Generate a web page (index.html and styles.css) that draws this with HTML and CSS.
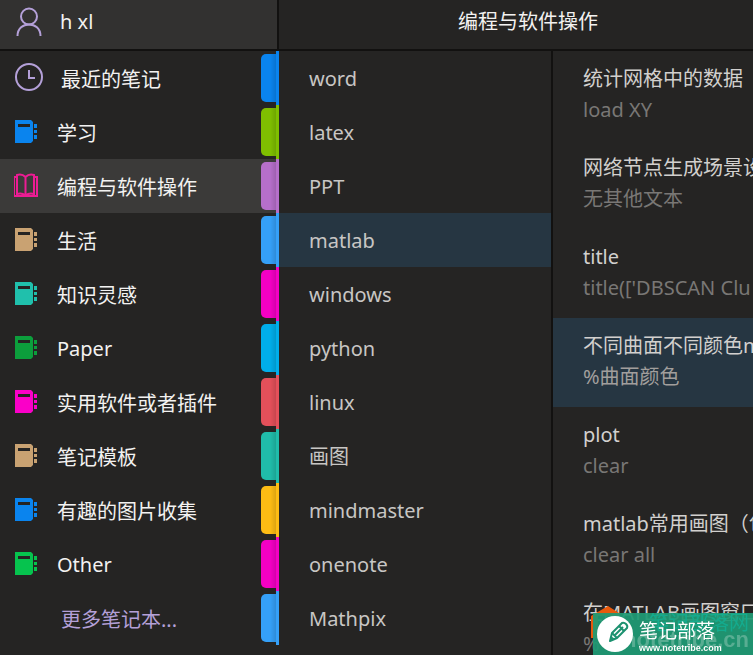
FILE: index.html
```html
<!DOCTYPE html>
<html lang="zh-CN">
<head>
    <meta charset="UTF-8">
    <meta name="viewport" content="width=device-width, initial-scale=1.0">
    <title>编程与软件操作</title>
    <link rel="stylesheet" href="styles.css">
</head>
<body>
    <!-- Shared icons -->
    <svg class="icon-defs" aria-hidden="true">
        <symbol id="notebook" viewBox="0 0 24 26">
            <path fill="currentColor" d="M1 1h16l2 2v19l-2 2H1z"/>
            <path fill="#252423" d="M4 5h12v3H4z"/>
            <path fill="currentColor" d="M20 5h3v4h-3zM20 11h3v3h-3zM20 16h3v4h-3z"/>
        </symbol>
    </svg>

    <div class="app">
        <header>
            <button class="account">
                <svg class="round-icon" viewBox="0 0 30 30" fill="none" stroke="currentColor" stroke-width="2">
                    <circle cx="15" cy="9.500" r="8"/>
                    <path d="M3.500 29c0-15.500 23-15.500 23 0"/>
                </svg>
                <span>h xl</span>
            </button>
            <h1>编程与软件操作</h1>
        </header>

        <main>
            <nav class="notebooks">
                <a href="#" class="recent">
                    <svg class="round-icon" viewBox="0 0 30 30" fill="none" stroke="currentColor" stroke-width="2">
                        <circle cx="15" cy="14" r="13"/>
                        <path d="M15 7v8h6"/>
                    </svg>
                    <span>最近的笔记</span>
                </a>
                <a href="#"><svg class="book blue"><use href="#notebook"/></svg><span>学习</span></a>
                <a href="#" class="selected">
                    <svg class="book pink" viewBox="0 0 24 26" fill="none" stroke="currentColor" stroke-width="2">
                        <path d="M11.500 4C9 1.500 6 1 3 2v19c3-1 6-.5 8.500 1.500C14 20.500 17 20 20 21V2c-3-1-6-.5-8.500 2v18"/>
                        <path d="M3 4H0v19h23V4h-3"/>
                    </svg>
                    <span>编程与软件操作</span>
                </a>
                <a href="#"><svg class="book tan"><use href="#notebook"/></svg><span>生活</span></a>
                <a href="#"><svg class="book teal"><use href="#notebook"/></svg><span>知识灵感</span></a>
                <a href="#"><svg class="book green"><use href="#notebook"/></svg><span>Paper</span></a>
                <a href="#"><svg class="book magenta"><use href="#notebook"/></svg><span>实用软件或者插件</span></a>
                <a href="#"><svg class="book tan"><use href="#notebook"/></svg><span>笔记模板</span></a>
                <a href="#"><svg class="book blue"><use href="#notebook"/></svg><span>有趣的图片收集</span></a>
                <a href="#"><svg class="book emerald"><use href="#notebook"/></svg><span>Other</span></a>
                <a href="#" class="more">更多笔记本...</a>
            </nav>

            <nav class="sections">
                <a href="#" class="blue">word</a>
                <a href="#" class="lime">latex</a>
                <a href="#" class="purple">PPT</a>
                <a href="#" class="sky selected">matlab</a>
                <a href="#" class="magenta">windows</a>
                <a href="#" class="cyan">python</a>
                <a href="#" class="red">linux</a>
                <a href="#" class="teal">画图</a>
                <a href="#" class="yellow">mindmaster</a>
                <a href="#" class="magenta">onenote</a>
                <a href="#" class="sky">Mathpix</a>
            </nav>

            <nav class="pages">
                <a href="#"><span>统计网格中的数据</span><small>load XY</small></a>
                <a href="#"><span>网络节点生成场景设</span><small>无其他文本</small></a>
                <a href="#"><span>title</span><small>title(['DBSCAN Clu</small></a>
                <a href="#" class="selected"><span>不同曲面不同颜色m</span><small>%曲面颜色</small></a>
                <a href="#"><span>plot</span><small>clear</small></a>
                <a href="#"><span>matlab常用画图（包</span><small>clear all</small></a>
                <a href="#"><span>在MATLAB画图窗口</span><small>%</small></a>
            </nav>
        </main>

        <div class="badge">
            <svg class="roof" viewBox="0 0 30 32"><path fill="#e8590c" d="M0 10l5-3 12-7 11 7v3H7v22H0z"/></svg>
            <div class="badge-body">
                <span class="ghost-top">笔记部落网</span>
                <span class="ghost">notetribe.cn</span>
                <svg class="pencil" viewBox="0 0 36 36">
                    <circle cx="18" cy="18" r="18" fill="#fff"/>
                    <g fill="none" stroke="#1d9270" stroke-width="2" stroke-linejoin="round">
                        <path d="M13 25l2-8L25 7q2-1 4 1t1 4L20 22z"/>
                        <path d="M15 17l5 5M22 10l5 5M18 19l8-8"/>
                    </g>
                    <path fill="#1d9270" d="M13 25l1-5 4 3z"/>
                </svg>
                <div class="badge-text">
                    <strong>笔记部落</strong>
                    <em>www.notetribe.com</em>
                </div>
            </div>
        </div>
    </div>
</body>
</html>
```
FILE: styles.css
```css
* {
    box-sizing: border-box;
}

body {
    margin: 0;
    background-color: #252423;
    color: #f3f2f1;
    font-family: "Noto Sans", "Noto Sans CJK SC", sans-serif;
    font-size: 20px;
}

a {
    color: inherit;
    text-decoration: none;
    white-space: nowrap;
}

.icon-defs {
    display: none;
}

.app {
    display: flex;
    flex-direction: column;
    height: 100vh;
    overflow: hidden;
}

header {
    display: flex;
    flex: none;
    height: 51px;
    border-bottom: 2px solid #121110;
}

.account {
    display: flex;
    align-items: center;
    gap: 16px;
    width: 279px;
    padding: 0 14px 6px;
    border: none;
    border-right: 2px solid #121110;
    background-color: #323130;
    color: inherit;
    font: inherit;
    cursor: pointer;
}

.round-icon {
    flex: none;
    width: 30px;
    height: 30px;
    color: #b4a0d8;
}

h1 {
    flex: 1;
    margin: 0;
    padding: 0 0 6px 24px;
    font-size: 20px;
    font-weight: 400;
    line-height: 44px;
    text-align: center;
}

main {
    display: flex;
    flex: 1;
    min-height: 0;
}

/* Notebook list */
.notebooks {
    flex: none;
    width: 279px;
}

.notebooks a {
    display: flex;
    align-items: center;
    gap: 19px;
    height: 54px;
    padding-left: 14px;
}

.notebooks .recent {
    gap: 17px;
}

.notebooks .selected {
    background-color: #3b3a39;
}

.notebooks .more {
    padding-left: 61px;
    color: #b4a0d8;
}

.book {
    flex: none;
    width: 24px;
    height: 26px;
}

/* Section list, each with a coloured tab on its left */
.sections {
    flex: none;
    width: 274px;
    border-right: 2px solid #121110;
    color: #c8c6c4;
}

.sections a {
    display: block;
    position: relative;
    height: 54px;
    padding-left: 30px;
    line-height: 56px;
}

.sections a::before {
    content: "";
    position: absolute;
    top: 3px;
    left: -18px;
    width: 18px;
    height: 48px;
    border-radius: 5px 0 0 5px;
    background: linear-gradient(to right, transparent 50%, #0003) var(--tab);
}

.sections a::after {
    content: "";
    position: absolute;
    top: 0;
    left: -3px;
    width: 3px;
    height: 54px;
    background-color: var(--tab);
}

.sections .selected {
    background-color: #263642;
}

/* Page list */
.pages {
    flex: 1;
    min-width: 0;
    overflow: hidden;
    color: #d2d0ce;
}

.pages a {
    display: block;
    height: 89px;
    padding: 12px 0 15px 30px;
    line-height: 31px;
    overflow: hidden;
}

.pages span,
.pages small {
    display: block;
    font-size: 20px;
}

.pages small {
    color: #797775;
}

.pages .selected {
    background-color: #263642;
}

.pages .selected small {
    color: #a19f9d;
}

/* Colours */
.book.blue { color: #0a84ee; }
.book.pink { color: #ec1c94; }
.book.tan { color: #c9a272; }
.book.teal { color: #20c0ac; }
.book.green { color: #0c9e3c; }
.book.magenta { color: #fa00c8; }
.book.emerald { color: #06c34e; }

.sections .blue { --tab: #0a84ee; }
.sections .lime { --tab: #7fbf00; }
.sections .purple { --tab: #b66fca; }
.sections .sky { --tab: #35a0f8; }
.sections .magenta { --tab: #f400c4; }
.sections .cyan { --tab: #00aeea; }
.sections .red { --tab: #e4505a; }
.sections .teal { --tab: #20bcaa; }
.sections .yellow { --tab: #fdbc14; }

/* Site badge in the corner */
.badge {
    position: fixed;
    right: 0;
    bottom: 0;
    width: 162px;
    height: 49px;
}

.roof {
    position: absolute;
    top: 0;
    left: 0;
    width: 30px;
    height: 32px;
}

.badge-body {
    position: absolute;
    right: 0;
    bottom: 0;
    display: flex;
    align-items: center;
    gap: 6px;
    width: 160px;
    height: 42px;
    padding-left: 4px;
    overflow: hidden;
    background-color: #1f9a75ee;
}

.pencil {
    position: relative;
    flex: none;
    width: 36px;
    height: 36px;
}

.badge-text {
    position: relative;
    padding-top: 3px;
    color: #fff;
}

.badge-text strong,
.badge-text em {
    display: block;
    font-style: normal;
    white-space: nowrap;
}

.badge-text strong {
    font-size: 19px;
    font-weight: 400;
    line-height: 24px;
}

.badge-text em {
    font-family: "Liberation Sans", sans-serif;
    font-size: 9px;
    font-weight: 700;
    line-height: 10px;
}

.ghost,
.ghost-top {
    position: absolute;
    right: 4px;
    white-space: nowrap;
}

.ghost {
    bottom: 0;
    color: #58ad92;
    font-family: "Liberation Sans", sans-serif;
    font-size: 22px;
    font-weight: 700;
    line-height: 30px;
}

.ghost-top {
    top: 0;
    color: #14ab8e;
    font-size: 20px;
    line-height: 20px;
}
```
